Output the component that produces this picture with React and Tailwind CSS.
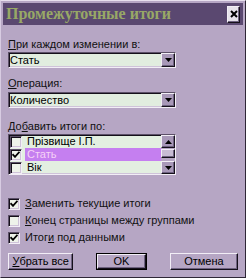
import React from 'react';

const sunken =
  'border border-t-[#5c5068] border-l-[#5c5068] border-b-[#f2eef6] border-r-[#f2eef6] shadow-[inset_1px_1px_0_#15101a,inset_-1px_-1px_0_#cfc3d9]';
const raised =
  'border border-t-[#f2eef6] border-l-[#f2eef6] border-b-[#15101a] border-r-[#15101a] shadow-[inset_-1px_-1px_0_#6e6280]';

function Arrow({ up }) {
  return (
    <svg width="7" height="4" viewBox="0 0 7 4">
      <path d={up ? 'M0 4 L7 4 L3.5 0 Z' : 'M0 0 L7 0 L3.5 4 Z'} fill="#000" />
    </svg>
  );
}

function Check({ checked, size = 12 }) {
  return (
    <span
      className={`flex shrink-0 items-center justify-center bg-[#eef3ea] ${sunken}`}
      style={{ width: size, height: size }}
    >
      {checked && (
        <svg width="8" height="7" viewBox="0 0 8 7">
          <path d="M0.5 3.2 L3 5.8 L7.5 0.8" stroke="#000" strokeWidth="1.8" fill="none" />
        </svg>
      )}
    </span>
  );
}

function Select({ value }) {
  return (
    <div className={`flex h-[16px] w-[168px] items-stretch bg-[#e1eddf] ${sunken}`}>
      <span className="flex flex-1 items-center pl-[1px] text-[11px] leading-none text-black">{value}</span>
      <span className={`flex w-[14px] items-center justify-center bg-[#a898b8] ${raised}`}>
        <Arrow />
      </span>
    </div>
  );
}

function Label({ text, u, className = '' }) {
  return (
    <div className={`text-[11px] leading-[13px] text-[#111] ${className}`}>
      {text.slice(0, u)}
      <span className="underline">{text[u]}</span>
      {text.slice(u + 1)}
    </div>
  );
}

const rows = [
  { name: 'Прізвище І.П.', checked: false },
  { name: 'Стать', checked: true, active: true },
  { name: 'Вік', checked: false },
];

export default function App() {
  return (
    <div className="h-[278px] w-[246px] border border-t-[#e8e0ee] border-l-[#d8cce2] border-b-[#2e2636] border-r-[#2e2636] bg-[#b6a6c4] p-[2px] font-['Liberation_Sans',Arial,sans-serif]">
      <div className="flex h-[22px] items-center justify-between bg-[#5a4870] pl-[3px] pr-[3px]">
        <span className="font-['Liberation_Serif',serif] text-[16px] font-bold leading-none text-[#98a866]">
          Промежуточные итоги
        </span>
        <span className={`flex h-[17px] w-[13px] items-center justify-center bg-[#e6e2ea] ${raised}`}>
          <svg width="8" height="8" viewBox="0 0 8 8">
            <path d="M1 1 L7 7 M7 1 L1 7" stroke="#000" strokeWidth="2" />
          </svg>
        </span>
      </div>

      <div className="flex flex-col px-[5px] pt-[13px]">
        <Label text="При каждом изменении в:" u={0} />
        <div className="mt-[1px]">
          <Select value="Стать" />
        </div>

        <Label text="Операция:" u={0} className="mt-[9px]" />
        <div className="mt-[2px]">
          <Select value="Количество" />
        </div>

        <Label text="Добавить итоги по:" u={2} className="mt-[12px]" />
        <div className={`mt-[1px] flex h-[41px] w-[168px] bg-[#e3efe1] ${sunken}`}>
          <div className="flex flex-1 flex-col">
            {rows.map((r) => (
              <div key={r.name} className="flex h-[13px] items-center">
                <span className="pl-[1px] pr-[3px]">
                  <Check checked={r.checked} size={12} />
                </span>
                <span
                  className={`flex h-full flex-1 items-center pl-[2px] text-[11px] leading-none ${
                    r.active ? 'bg-[#c57ff0] text-[#f6d2f6]' : 'text-black'
                  }`}
                >
                  {r.name}
                </span>
              </div>
            ))}
          </div>
          <div className="flex w-[14px] flex-col bg-[#b6a6c4]">
            <span className={`flex h-[13px] items-center justify-center bg-[#a898b8] ${raised}`}>
              <Arrow up />
            </span>
            <span className="flex-1 pt-[1px]">
              <span className={`block h-[9px] bg-[#c8bcd4] ${raised}`} />
            </span>
            <span className={`flex h-[13px] items-center justify-center bg-[#a898b8] ${raised}`}>
              <Arrow />
            </span>
          </div>
        </div>

        <div className="mt-[22px] flex flex-col gap-[4px]">
          <div className="flex items-center gap-[5px]">
            <Check checked size={12} />
            <Label text="Заменить текущие итоги" u={0} />
          </div>
          <div className="flex items-center gap-[5px]">
            <Check size={12} />
            <Label text="Конец страницы между группами" u={0} />
          </div>
          <div className="flex items-center gap-[5px]">
            <Check checked size={12} />
            <Label text="Итоги под данными" u={4} />
          </div>
        </div>

        <div className="mt-[9px] flex items-center">
          <span className={`flex h-[17px] w-[66px] items-center justify-center bg-[#b6a6c4] text-[11px] ${raised}`}>
            <span className="underline">У</span>брать все
          </span>
          <span className="ml-[23px] flex h-[17px] w-[51px] items-center justify-center border border-[#000] bg-[#b6a6c4]">
            <span className={`flex h-full w-full items-center justify-center text-[11px] ${raised}`}>OK</span>
          </span>
          <span className={`ml-[23px] flex h-[17px] w-[69px] items-center justify-center bg-[#b6a6c4] text-[11px] ${raised}`}>
            Отмена
          </span>
        </div>
      </div>
    </div>
  );
}
